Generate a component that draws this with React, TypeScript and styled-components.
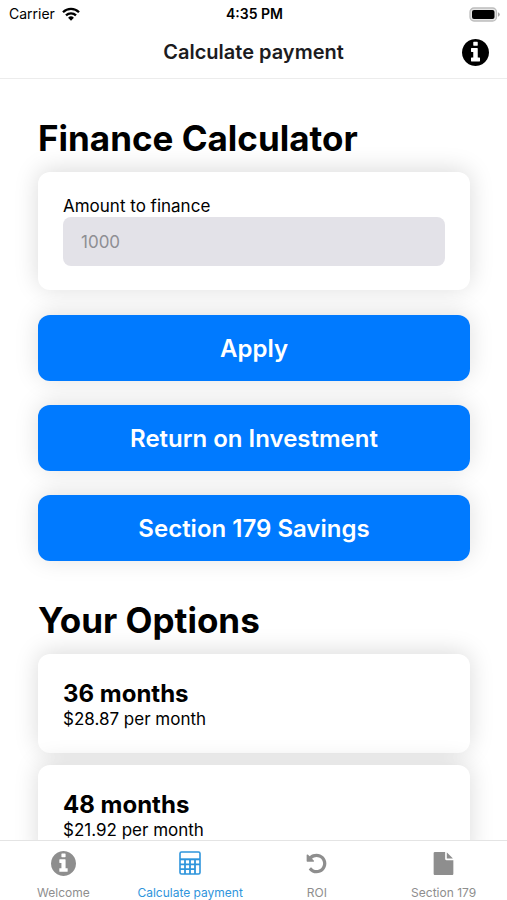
import React from "react";
import styled, { createGlobalStyle } from "styled-components";

const GlobalStyle = createGlobalStyle`
  * { box-sizing: border-box; }
  body {
    margin: 0;
    background: #fff;
    color: #000;
    font-family: Inter, "Liberation Sans", sans-serif;
  }
  button, input { font: inherit; }
`;

const Screen = styled.div`
  display: flex;
  flex-direction: column;
  height: 100vh;
  overflow: hidden;
`;

const StatusBar = styled.div`
  display: grid;
  grid-template-columns: 1fr auto 1fr;
  align-items: center;
  flex: none;
  height: 26px;
  padding: 2px 7px 0 9px;
  font-size: 14px;
  line-height: 20px;
`;

const Carrier = styled.span`
  display: flex;
  align-items: center;
  gap: 7px;
`;

const Clock = styled.time`
  font-weight: 600;
`;

const Battery = styled.svg`
  justify-self: end;
`;

const Header = styled.header`
  display: grid;
  grid-template-columns: 1fr auto 1fr;
  align-items: center;
  flex: none;
  height: 53px;
  padding: 0 18px;
  border-bottom: 1px solid #ececec;
`;

const HeaderTitle = styled.h1`
  grid-column: 2;
  margin: 0;
  font-size: 20px;
  line-height: 24px;
  font-weight: 600;
  color: #1c1c1e;
`;

const InfoButton = styled.button`
  display: flex;
  justify-self: end;
  padding: 0;
  border: 0;
  background: none;
  color: #000;
  cursor: pointer;
`;

const Content = styled.main`
  flex: 1;
  min-height: 0;
  overflow: hidden;
  padding: 37px 37px 0 38px;
`;

const SectionTitle = styled.h2`
  margin: 0 0 11px;
  font-size: 35px;
  line-height: 45px;
  font-weight: 700;
`;

const Card = styled.div`
  padding: 24px 25px;
  border-radius: 12px;
  background: #fff;
  box-shadow: 0 -2px 24px rgba(0, 0, 0, 0.15);
`;

const FieldLabel = styled.label`
  display: block;
  font-size: 17px;
  line-height: 21px;
`;

const AmountInput = styled.input`
  display: block;
  width: 100%;
  height: 49px;
  padding: 0 18px;
  border: 0;
  border-radius: 8px;
  background: #e3e2e8;
  font-size: 17px;
  &::placeholder { color: #8e8e93; opacity: 1; }
`;

const Actions = styled.div`
  display: grid;
  gap: 24px;
  margin: 25px 0 37px;
`;

const ActionButton = styled.button`
  height: 66px;
  border: 0;
  border-radius: 12px;
  background: #007aff;
  box-shadow: 0 -2px 24px rgba(0, 0, 0, 0.13);
  color: #fff;
  font-size: 24px;
  font-weight: 600;
  cursor: pointer;
`;

const Options = styled.div`
  display: grid;
  gap: 12px;
`;

const Option = styled(Card)`
  padding: 25px 25px 23px;
`;

const Term = styled.h3`
  margin: 0;
  font-size: 24px;
  line-height: 30px;
  font-weight: 700;
`;

const Payment = styled.p`
  margin: 0;
  font-size: 17px;
  line-height: 21px;
`;

const TabBar = styled.nav`
  display: grid;
  grid-template-columns: repeat(4, 1fr);
  flex: none;
  height: 60px;
  border-top: 1px solid #e4e4e4;
  background: #fff;
`;

const Tab = styled.a<{ $active?: boolean }>`
  display: flex;
  flex-direction: column;
  align-items: center;
  gap: 8px;
  padding-top: 9px;
  color: ${(p) => (p.$active ? "#2f95dc" : "#8e8e8e")};
  font-size: 12px;
  line-height: 18px;
  text-decoration: none;
  white-space: nowrap;
`;

const IconSlot = styled.span`
  display: flex;
  align-items: center;
  justify-content: center;
  height: 26px;
`;

const WifiIcon = () => (
  <svg width="18" height="14" viewBox="0 0 18 14" aria-hidden="true">
    <g fill="none" stroke="#000" strokeWidth="2.3">
      <path d="M1 5.2a11.4 11.4 0 0 1 16 0" />
      <path d="M4 8.4a7.2 7.2 0 0 1 10 0" />
    </g>
    <path d="M6.1 10.7a4.2 4.2 0 0 1 5.8 0L9 13.7z" />
  </svg>
);

const BatteryIcon = () => (
  <Battery width="31" height="15" viewBox="0 0 31 15" role="img" aria-label="Battery full">
    <rect x="1" y="1" width="26.5" height="13" rx="4" fill="#e6e6e6" stroke="#bdbdbd" strokeWidth="1.3" />
    <rect x="3" y="3" width="22.5" height="9" rx="2" />
    <path d="M29 5.2q1.8.7 1.8 2.3T29 9.8z" fill="#a5a5a5" />
  </Battery>
);

const InfoIcon = ({ size }: { size: number }) => (
  <svg width={size} height={size} viewBox="128 128 1536 1536" fill="currentColor" aria-hidden="true">
    <path d="M1152 1376v-160q0-14-9-23t-23-9h-96V672q0-14-9-23t-23-9H672q-14 0-23 9t-9 23v160q0 14 9 23t23 9h96v320h-96q-14 0-23 9t-9 23v160q0 14 9 23t23 9h448q14 0 23-9t9-23zm-128-896V320q0-14-9-23t-23-9H800q-14 0-23 9t-9 23v160q0 14 9 23t23 9h192q14 0 23-9t9-23zm640 416q0 209-103 385.500T1281.500 1561 896 1664t-385.500-103T231 1281.500 128 896t103-385.500T510.500 231 896 128t385.500 103T1561 510.500 1664 896z" />
  </svg>
);

const CalculatorIcon = () => (
  <svg width="22" height="24" viewBox="0 0 22 24" fill="none" stroke="currentColor" aria-hidden="true">
    <rect x="1" y="1" width="20" height="22" rx="1.5" strokeWidth="1.6" />
    <path d="M1 8.3h20" strokeWidth="2" />
    <path d="M1 13.3h20M1 18.2h15.5M6 8v15M11 8v15M16 8v15" strokeWidth="1.8" />
  </svg>
);

const UndoIcon = () => (
  <svg width="23" height="23" viewBox="0 0 1792 1792" fill="currentColor" aria-hidden="true">
    <path d="M1664 896q0 156-61 298t-164 245-245 164-298 61q-172 0-327-72.500T305 1387q-7-10-6.500-22.500t8.500-20.500l137-138q10-9 25-9 16 2 23 12 73 95 179 147t225 52q104 0 198.500-40.500T1258 1258t109.500-163.500T1408 896t-40.500-198.500T1258 534t-163.500-109.500T896 384q-98 0-188 35.500T548 521l137 138q31 30 14 69-17 40-59 40H192q-26 0-45-19t-19-45V256q0-42 40-59 39-17 69 14l130 129q107-101 244.500-156.500T896 128q156 0 298 61t245 164 164 245 61 298z" />
  </svg>
);

const FileIcon = () => (
  <svg width="23" height="23" viewBox="0 0 1792 1792" fill="currentColor" aria-hidden="true">
    <path d="M1152 512V40q22 14 36 28l408 408q14 14 28 36h-472zm-128 32q0 40 28 68t68 28h544v1056q0 40-28 68t-68 28H224q-40 0-68-28t-28-68V96q0-40 28-68T224 0h800v544z" />
  </svg>
);

const actions = ["Apply", "Return on Investment", "Section 179 Savings"];

const options = [
  { term: "36 months", payment: "$28.87 per month" },
  { term: "48 months", payment: "$21.92 per month" },
];

const tabs = [
  { label: "Welcome", href: "#welcome", icon: <InfoIcon size={25} /> },
  { label: "Calculate payment", href: "#calculate", icon: <CalculatorIcon />, active: true },
  { label: "ROI", href: "#roi", icon: <UndoIcon /> },
  { label: "Section 179", href: "#section-179", icon: <FileIcon /> },
];

export default function App() {
  return (
    <Screen>
      <GlobalStyle />
      <StatusBar>
        <Carrier>Carrier <WifiIcon /></Carrier>
        <Clock>4:35 PM</Clock>
        <BatteryIcon />
      </StatusBar>
      <Header>
        <HeaderTitle>Calculate payment</HeaderTitle>
        <InfoButton type="button" aria-label="Information"><InfoIcon size={27} /></InfoButton>
      </Header>
      <Content>
        <SectionTitle>Finance Calculator</SectionTitle>
        <Card>
          <FieldLabel htmlFor="amount">Amount to finance</FieldLabel>
          <AmountInput id="amount" inputMode="decimal" placeholder="1000" />
        </Card>
        <Actions>
          {actions.map((label) => (
            <ActionButton key={label} type="button">{label}</ActionButton>
          ))}
        </Actions>
        <SectionTitle>Your Options</SectionTitle>
        <Options>
          {options.map((option) => (
            <Option key={option.term}>
              <Term>{option.term}</Term>
              <Payment>{option.payment}</Payment>
            </Option>
          ))}
        </Options>
      </Content>
      <TabBar>
        {tabs.map((tab) => (
          <Tab key={tab.label} href={tab.href} $active={tab.active} aria-current={tab.active ? "page" : undefined}>
            <IconSlot>{tab.icon}</IconSlot>
            {tab.label}
          </Tab>
        ))}
      </TabBar>
    </Screen>
  );
}
